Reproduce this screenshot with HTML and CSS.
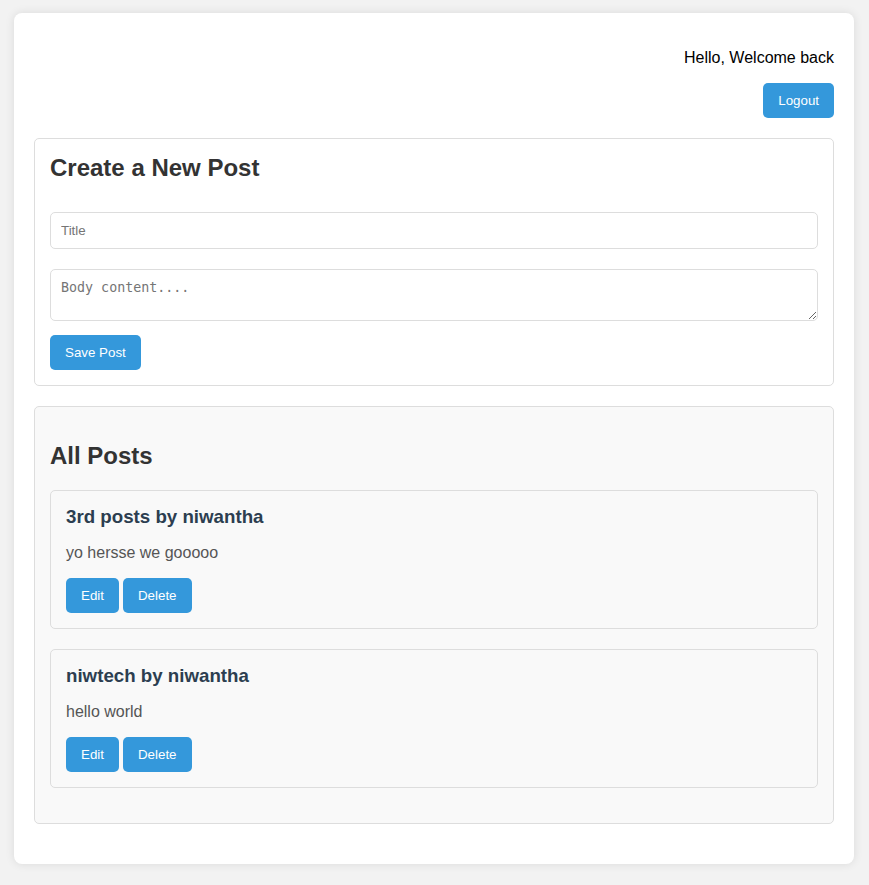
FILE: index.html
```html
<!DOCTYPE html>
<html lang="en">
<head>
<meta charset="utf-8">
<title>Posts</title>
<link rel="stylesheet" href="styles.css">
</head>
<body>
<div class="container">
  <header class="header">
    <p class="welcome">Hello, Welcome back</p>
    <button class="btn">Logout</button>
  </header>

  <section class="panel create">
    <h2 class="panel-title first">Create a New Post</h2>
    <input class="field" type="text" placeholder="Title">
    <textarea class="field area" rows="2" placeholder="Body content...."></textarea>
    <button class="btn save">Save Post</button>
  </section>

  <section class="panel posts">
    <h2 class="panel-title">All Posts</h2>
    <div class="post">
      <h3 class="post-title">3rd posts by niwantha</h3>
      <p class="post-body">yo hersse we gooooo</p>
      <div class="actions">
        <button class="btn">Edit</button>
        <button class="btn">Delete</button>
      </div>
    </div>
    <div class="post">
      <h3 class="post-title">niwtech by niwantha</h3>
      <p class="post-body">hello world</p>
      <div class="actions">
        <button class="btn">Edit</button>
        <button class="btn">Delete</button>
      </div>
    </div>
  </section>
</div>
</body>
</html>
```

FILE: styles.css
```css
html, body {
  margin: 0;
  padding: 0;
}
body {
  background: #f2f2f2;
  font-family: "Liberation Sans", Arial, sans-serif;
  padding-top: 13px;
}
.container {
  width: 800px;
  margin: 0 auto 21px;
  padding: 20px;
  background: #fff;
  border-radius: 8px;
  box-shadow: 0 0 10px rgba(0, 0, 0, 0.1);
  position: relative;
  left: -0.5px;
}
.header {
  display: flex;
  flex-direction: column;
  align-items: flex-end;
}
.welcome {
  margin: 16px 0;
  font-size: 16px;
  line-height: 18px;
  color: #000;
}
.btn {
  font-family: "Liberation Sans", Arial, sans-serif;
  font-size: 13.333px;
  line-height: 15px;
  padding: 10px 15px;
  background: #3498db;
  color: #fff;
  border: none;
  border-radius: 5px;
  cursor: pointer;
}
.panel {
  margin-top: 20px;
  border: 1px solid #ddd;
  border-radius: 5px;
  padding: 15px;
}
.posts {
  background: #f9f9f9;
  margin-bottom: 20px;
}
.panel-title {
  margin: 20px 0;
  font-size: 24px;
  line-height: 28px;
  color: #333;
}
.panel-title.first {
  margin: 0 0 30px;
}
.field {
  display: block;
  box-sizing: border-box;
  width: 100%;
  margin: 10px 0;
  padding: 10px;
  border: 1px solid #ddd;
  border-radius: 5px;
  font-family: "Liberation Sans", Arial, sans-serif;
  font-size: 13.333px;
  line-height: 14px;
  height: 37px;
}
.field::placeholder {
  color: #757575;
}
.area {
  font-family: "DejaVu Sans Mono", monospace;
  font-size: 13.333px;
  line-height: 15px;
  height: 52px;
  margin-top: 20px;
}
.save {
  margin-top: 4px;
}
.post {
  margin: 20px 0;
  border: 1px solid #ddd;
  border-radius: 5px;
  padding: 15px;
  background: #f9f9f9;
}
.post-title {
  margin: 0;
  font-size: 18.72px;
  line-height: 22px;
  color: #2c3e50;
}
.post-body {
  margin: 16px 0;
  font-size: 16px;
  line-height: 18px;
  color: #555;
}
.actions {
  display: flex;
  gap: 4px;
}
```
